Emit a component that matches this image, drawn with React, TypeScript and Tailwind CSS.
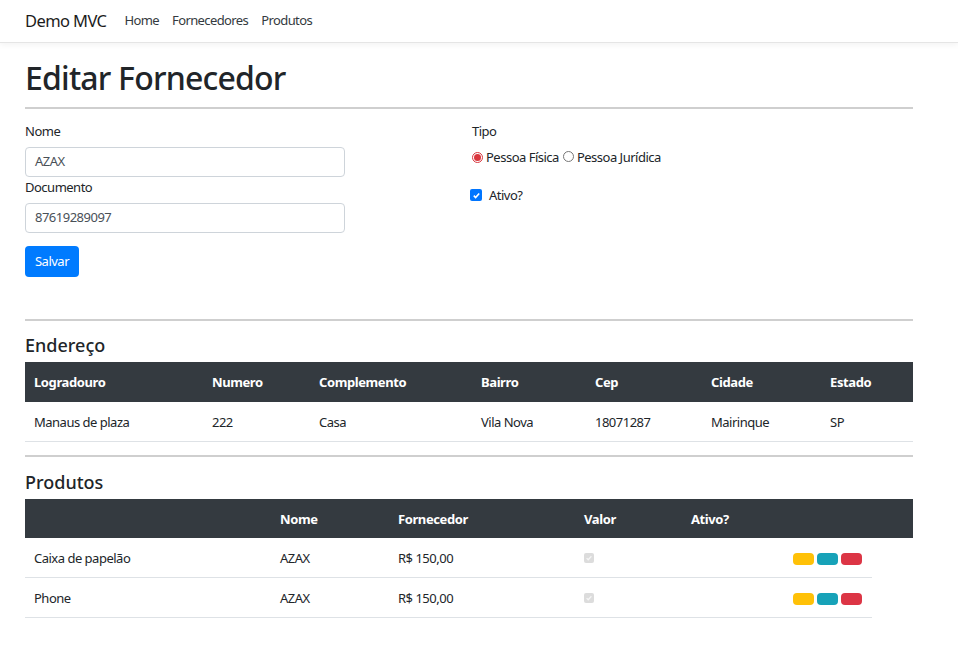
import React from "react";

const font = { fontFamily: '"Noto Sans", "Open Sans", Arial, sans-serif' };

const enderecoCols = [
  { label: "Logradouro", value: "Manaus de plaza", w: "w-[178px]" },
  { label: "Numero", value: "222", w: "w-[107px]" },
  { label: "Complemento", value: "Casa", w: "w-[162px]" },
  { label: "Bairro", value: "Vila Nova", w: "w-[114px]" },
  { label: "Cep", value: "18071287", w: "w-[116px]" },
  { label: "Cidade", value: "Mairinque", w: "w-[119px]" },
  { label: "Estado", value: "SP", w: "flex-1" },
];

const produtos = [
  { nome: "Caixa de papelão", fornecedor: "AZAX", valor: "R$ 150,00" },
  { nome: "Phone", fornecedor: "AZAX", valor: "R$ 150,00" },
];

function Radio({ checked }: { checked?: boolean }) {
  return (
    <span
      className={`inline-flex items-center justify-center w-[11px] h-[11px] rounded-full border ${
        checked ? "border-[#d9363e]" : "border-[#767676]"
      } bg-white`}
    >
      {checked && <span className="w-[7px] h-[7px] rounded-full bg-[#d9363e]" />}
    </span>
  );
}

function Check({ disabled }: { disabled?: boolean }) {
  if (disabled) {
    return (
      <span className="inline-flex items-center justify-center w-[10px] h-[10px] rounded-[2px] bg-[#dcdcdc]">
        <svg width="8" height="8" viewBox="0 0 10 10">
          <path d="M2 5.2l2 2 4-4.4" stroke="#f5f5f5" strokeWidth="1.6" fill="none" />
        </svg>
      </span>
    );
  }
  return (
    <span className="inline-flex items-center justify-center w-[12px] h-[12px] rounded-[2px] bg-[#0075ff]">
      <svg width="9" height="9" viewBox="0 0 10 10">
        <path d="M2 5.2l2 2 4-4.4" stroke="#fff" strokeWidth="1.8" fill="none" />
      </svg>
    </span>
  );
}

export default function App() {
  return (
    <div className="min-h-[656px] bg-white text-[13px] tracking-[-0.5px] text-[#212529]" style={font}>
      {/* navbar */}
      <nav className="h-[43px] flex items-center px-[25px] bg-white border-b border-[#e5e5e5] shadow-[0_2px_6px_rgba(0,0,0,0.05)]">
        <span className="text-[16.5px] tracking-[-0.6px] text-[#1b1b1b] mr-[18px]">Demo MVC</span>
        <div className="flex gap-[13px] text-[13px] tracking-[-0.6px] text-[#343a40]">
          <span>Home</span>
          <span>Fornecedores</span>
          <span>Produtos</span>
        </div>
      </nav>

      <main className="px-[25px] w-[938px]">
        <h1 className="text-[32px] tracking-[-0.8px] font-medium leading-[38px] mt-[16px] mb-[10px]">Editar Fornecedor</h1>
        <div className="h-[2px] bg-[#cfcfcf]" />

        {/* form */}
        <div className="flex pt-[12px]">
          <div className="w-[447px] flex flex-col">
            <label className="leading-[20px]">Nome</label>
            <div className="mt-[6px] w-[320px] h-[30px] border border-[#ced4da] rounded-[4px] flex items-center px-[9px] text-[#495057]">
              AZAX
            </div>
            <label className="leading-[20px]">Documento</label>
            <div className="mt-[6px] w-[320px] h-[30px] border border-[#ced4da] rounded-[4px] flex items-center px-[9px] text-[#495057]">
              87619289097
            </div>
            <div className="mt-[13px] w-[54px] h-[31px] rounded-[4px] bg-[#007bff] text-white flex items-center justify-center">
              Salvar
            </div>
          </div>
          <div className="flex flex-col">
            <label className="leading-[20px]">Tipo</label>
            <div className="mt-[6px] flex items-center leading-[20px]">
              <Radio checked />
              <span className="ml-[3px]">Pessoa Física</span>
              <span className="ml-[4px]"><Radio /></span>
              <span className="ml-[3px]">Pessoa Jurídica</span>
            </div>
            <div className="mt-[18px] -ml-[2px] flex items-center leading-[20px]">
              <Check />
              <span className="ml-[7px]">Ativo?</span>
            </div>
          </div>
        </div>

        <div className="h-[2px] bg-[#cfcfcf] mt-[42px]" />

        {/* endereco */}
        <h4 className="text-[18px] tracking-normal font-medium leading-[1.2] mt-[14px] mb-[5px]">Endereço</h4>
        <div className="flex h-[40px] pt-[3px] items-center bg-[#343a40] text-white font-bold tracking-[-0.4px]">
          {enderecoCols.map((c) => (
            <div key={c.label} className={`${c.w} pl-[9px]`}>{c.label}</div>
          ))}
        </div>
        <div className="flex h-[40px] pt-[3px] items-center border-b border-[#dee2e6]">
          {enderecoCols.map((c) => (
            <div key={c.label} className={`${c.w} pl-[9px]`}>{c.value}</div>
          ))}
        </div>
        <div className="h-[2px] bg-[#cfcfcf] mt-[13px]" />

        {/* produtos */}
        <h4 className="text-[18px] tracking-normal font-medium leading-[1.2] mt-[15px] mb-[6px]">Produtos</h4>
        <div className="flex h-[39px] pt-[3px] items-center bg-[#343a40] text-white font-bold tracking-[-0.4px]">
          <div className="w-[246px]" />
          <div className="w-[118px] pl-[9px]">Nome</div>
          <div className="w-[186px] pl-[9px]">Fornecedor</div>
          <div className="w-[107px] pl-[9px]">Valor</div>
          <div className="flex-1 pl-[9px]">Ativo?</div>
        </div>
        {produtos.map((p) => (
          <div key={p.nome} className="flex w-[847px] h-[40px] pt-[2px] items-center border-b border-[#dee2e6]">
            <div className="w-[246px] pl-[9px]">{p.nome}</div>
            <div className="w-[118px] pl-[9px]">{p.fornecedor}</div>
            <div className="w-[186px] pl-[9px]">{p.valor}</div>
            <div className="w-[107px] pl-[9px] flex -mt-[2px]">
              <Check disabled />
            </div>
            <div className="flex-1 flex justify-end gap-[3px] pr-[10px]">
              <span className="w-[21px] h-[12px] rounded-[4px] bg-[#ffc107]" />
              <span className="w-[21px] h-[12px] rounded-[4px] bg-[#17a2b8]" />
              <span className="w-[21px] h-[12px] rounded-[4px] bg-[#dc3545]" />
            </div>
          </div>
        ))}
      </main>
    </div>
  );
}
